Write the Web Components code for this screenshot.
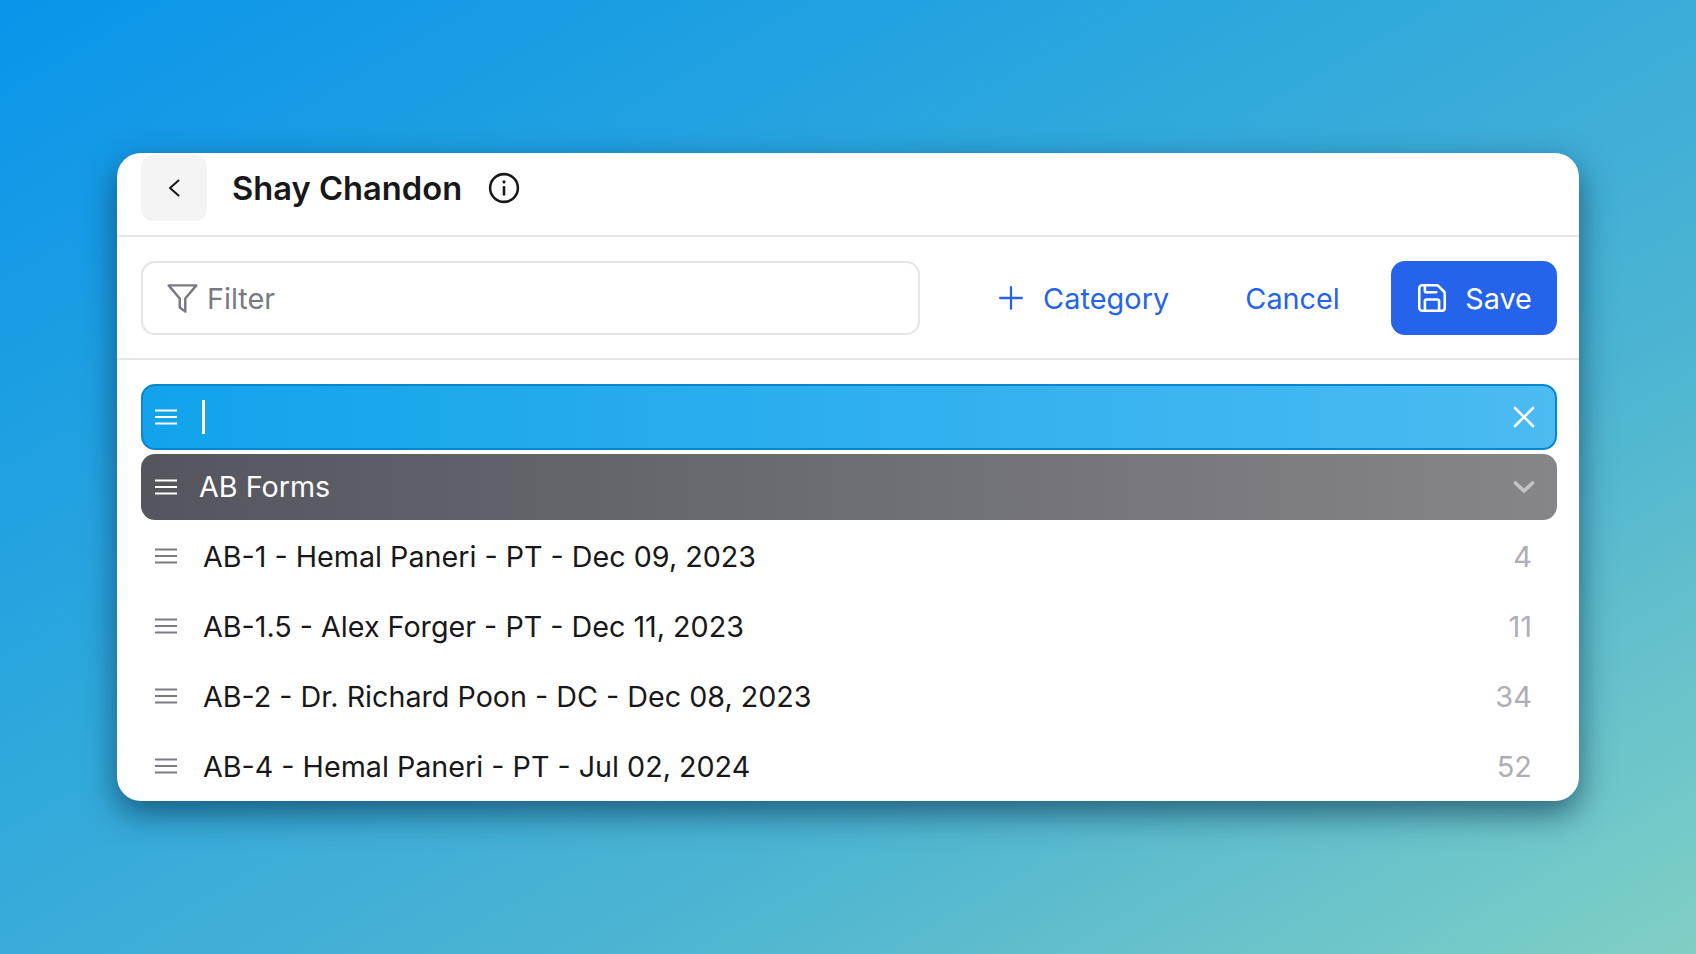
<!DOCTYPE html>
<html>
<head>
<meta charset="utf-8">
<style>
  html, body { margin: 0; height: 100%; }
  body {
    width: 1696px;
    height: 954px;
    overflow: hidden;
    font-family: "Inter", "Liberation Sans", sans-serif;
    background: linear-gradient(150deg, #0a94ea 0%, #2aa6de 35%, #4db4d2 68%, #80cfc4 100%);
    display: flex;
    flex-direction: column;
    padding: 153px 0 0 117px;
    box-sizing: border-box;
  }
</style>
</head>
<body>
<app-card>
  <app-header slot="header" title-text="Shay Chandon"></app-header>
  <app-toolbar slot="toolbar"></app-toolbar>
  <edit-row></edit-row>
  <group-row>AB Forms</group-row>
  <item-row count="4">AB-1 - Hemal Paneri - PT - Dec 09, 2023</item-row>
  <item-row count="11">AB-1.5 - Alex Forger - PT - Dec 11, 2023</item-row>
  <item-row count="34">AB-2 - Dr. Richard Poon - DC - Dec 08, 2023</item-row>
  <item-row count="52">AB-4 - Hemal Paneri - PT - Jul 02, 2024</item-row>
</app-card>

<script>
const menuIcon = `<svg width="24" height="24" viewBox="0 0 24 24" fill="none" stroke="currentColor" stroke-width="2"><path d="M1 5.5h22M1 12h22M1 18.5h22"/></svg>`;

class AppCard extends HTMLElement {
  constructor() {
    super();
    this.attachShadow({ mode: "open" });
    this.shadowRoot.innerHTML = `
      <style>
        :host {
          display: block;
          width: 1462px;
          height: 648px;
          background: #fff;
          border-radius: 24px;
          overflow: hidden;
          box-shadow: 0 12px 32px rgba(5, 40, 70, 0.62);
          flex: none;
        }
        .list {
          display: flex;
          flex-direction: column;
          gap: 4px;
          padding: 24px 22px 0 24px;
        }
      </style>
      <slot name="header"></slot>
      <slot name="toolbar"></slot>
      <div class="list"><slot></slot></div>
    `;
  }
}

class AppHeader extends HTMLElement {
  constructor() {
    super();
    this.attachShadow({ mode: "open" });
  }

  connectedCallback() {
    this.shadowRoot.innerHTML = `
      <style>
        :host {
          display: flex;
          align-items: center;
          height: 84px;
          padding: 2px 0 14px 24px;
          box-sizing: border-box;
          border-bottom: 2px solid #e6e6e6;
          color: #18181b;
        }
        .back {
          width: 66px;
          height: 66px;
          border-radius: 12px;
          background: #f4f4f4;
          display: flex;
          align-items: center;
          justify-content: center;
        }
        h1 {
          margin: 0 0 0 25px;
          font-size: 32.7px;
          font-weight: 600;
        }
        .info { margin-left: 25px; display: block; }
      </style>
      <div class="back">
        <svg width="24" height="24" viewBox="0 0 24 24" fill="none" stroke="#18181b" stroke-width="2" stroke-linecap="round" stroke-linejoin="round"><path d="M16.5 4.5L8 12l8.5 7.5"/></svg>
      </div>
      <h1>${this.getAttribute("title-text")}</h1>
      <svg class="info" width="34" height="34" viewBox="0 0 24 24" fill="none" stroke="#18181b" stroke-width="1.8" stroke-linecap="round"><circle cx="12" cy="12" r="9.8"/><path d="M12 11.5v5"/><path d="M12 7.6v.1" stroke-width="2.2"/></svg>
    `;
  }
}

class AppToolbar extends HTMLElement {
  constructor() {
    super();
    this.attachShadow({ mode: "open" });
    this.shadowRoot.innerHTML = `
      <style>
        :host {
          display: flex;
          align-items: center;
          height: 123px;
          padding: 1px 22px 0 24px;
          box-sizing: border-box;
          border-bottom: 2px solid #e6e6e6;
          font-size: 28.8px;
          color: #2563eb;
        }
        .filter {
          width: 779px;
          height: 74px;
          box-sizing: border-box;
          border: 2px solid #e5e5e5;
          border-radius: 14px;
          display: flex;
          align-items: center;
          gap: 7px;
          padding-left: 22px;
          color: #797982;
        }
        .action { display: flex; align-items: center; }
        .category { margin-left: 78px; gap: 19px; }
        .category span { letter-spacing: 0.1px; }
        .cancel { margin-left: 76px; }
        .save {
          margin-left: auto;
          width: 166px;
          height: 74px;
          border-radius: 14px;
          background: #2563eb;
          color: #fff;
          justify-content: center;
          gap: 16px;
        }
        .save svg { margin-left: -1px; }
      </style>
      <div class="filter">
        <svg width="35" height="35" viewBox="0 0 24 24" fill="none" stroke="currentColor" stroke-width="1.7" stroke-linejoin="round"><path d="M2.5 3h19l-7.6 9v9l-3.8-2.8V12z"/></svg>
        <span>Filter</span>
      </div>
      <div class="action category">
        <svg width="26" height="26" viewBox="0 0 24 24" fill="none" stroke="currentColor" stroke-width="2.1" stroke-linecap="round"><path d="M12 2v20M2 12h20"/></svg>
        <span>Category</span>
      </div>
      <div class="action cancel">Cancel</div>
      <div class="action save">
        <svg width="34" height="34" viewBox="0 0 24 24" fill="none" stroke="currentColor" stroke-width="1.8" stroke-linecap="round" stroke-linejoin="round"><path d="M15.2 3a2 2 0 0 1 1.4.6l3.8 3.8a2 2 0 0 1 .6 1.4V19a2 2 0 0 1-2 2H5a2 2 0 0 1-2-2V5a2 2 0 0 1 2-2z"/><path d="M17 21v-7a1 1 0 0 0-1-1H8a1 1 0 0 0-1 1v7"/><path d="M7 3v4a1 1 0 0 0 1 1h7"/></svg>
        <span>Save</span>
      </div>
    `;
  }
}

class EditRow extends HTMLElement {
  constructor() {
    super();
    this.attachShadow({ mode: "open" });
    this.shadowRoot.innerHTML = `
      <style>
        :host {
          display: flex;
          align-items: center;
          height: 66px;
          box-sizing: border-box;
          padding: 0 19px 0 11px;
          border: 2px solid #0a86cf;
          border-radius: 14px;
          background: linear-gradient(90deg, #12a3eb, #4bbbf2);
          color: #fff;
        }
        .caret { width: 3px; height: 34px; background: #fff; margin-left: 24px; }
        svg.close { margin-left: auto; }
      </style>
      ${menuIcon}
      <div class="caret"></div>
      <svg class="close" width="24" height="24" viewBox="0 0 24 24" fill="none" stroke="currentColor" stroke-width="2.6" stroke-linecap="round"><path d="M3 3l18 18M21 3L3 21"/></svg>
    `;
  }
}

class GroupRow extends HTMLElement {
  constructor() {
    super();
    this.attachShadow({ mode: "open" });
    this.shadowRoot.innerHTML = `
      <style>
        :host {
          display: flex;
          align-items: center;
          height: 66px;
          box-sizing: border-box;
          padding: 0 21px 1px 13px;
          border-radius: 14px;
          background: linear-gradient(90deg, #55555e, #85858a);
          color: #fff;
          font-size: 28.7px;
        }
        .name { margin-left: 21px; }
        svg.chev { margin-left: auto; }
      </style>
      ${menuIcon}
      <span class="name"><slot></slot></span>
      <svg class="chev" width="24" height="24" viewBox="0 0 24 24" fill="none" stroke="#c4c4c8" stroke-width="3.6" stroke-linecap="round" stroke-linejoin="round"><path d="M3.5 8l8.5 8 8.5-8"/></svg>
    `;
  }
}

class ItemRow extends HTMLElement {
  constructor() {
    super();
    this.attachShadow({ mode: "open" });
  }

  connectedCallback() {
    this.shadowRoot.innerHTML = `
      <style>
        :host {
          display: flex;
          align-items: center;
          height: 66px;
          box-sizing: border-box;
          padding: 0 25px 2px 13px;
          color: #18181b;
          font-size: 28.7px;
        }
        svg { color: #7b7b85; }
        .name { margin-left: 25px; }
        .count { margin-left: auto; color: #aeaeb4; font-kerning: none; font-size: 29px; }
      </style>
      ${menuIcon}
      <span class="name"><slot></slot></span>
      <span class="count">${this.getAttribute("count")}</span>
    `;
  }
}

customElements.define("app-card", AppCard);
customElements.define("app-header", AppHeader);
customElements.define("app-toolbar", AppToolbar);
customElements.define("edit-row", EditRow);
customElements.define("group-row", GroupRow);
customElements.define("item-row", ItemRow);
</script>
</body>
</html>
